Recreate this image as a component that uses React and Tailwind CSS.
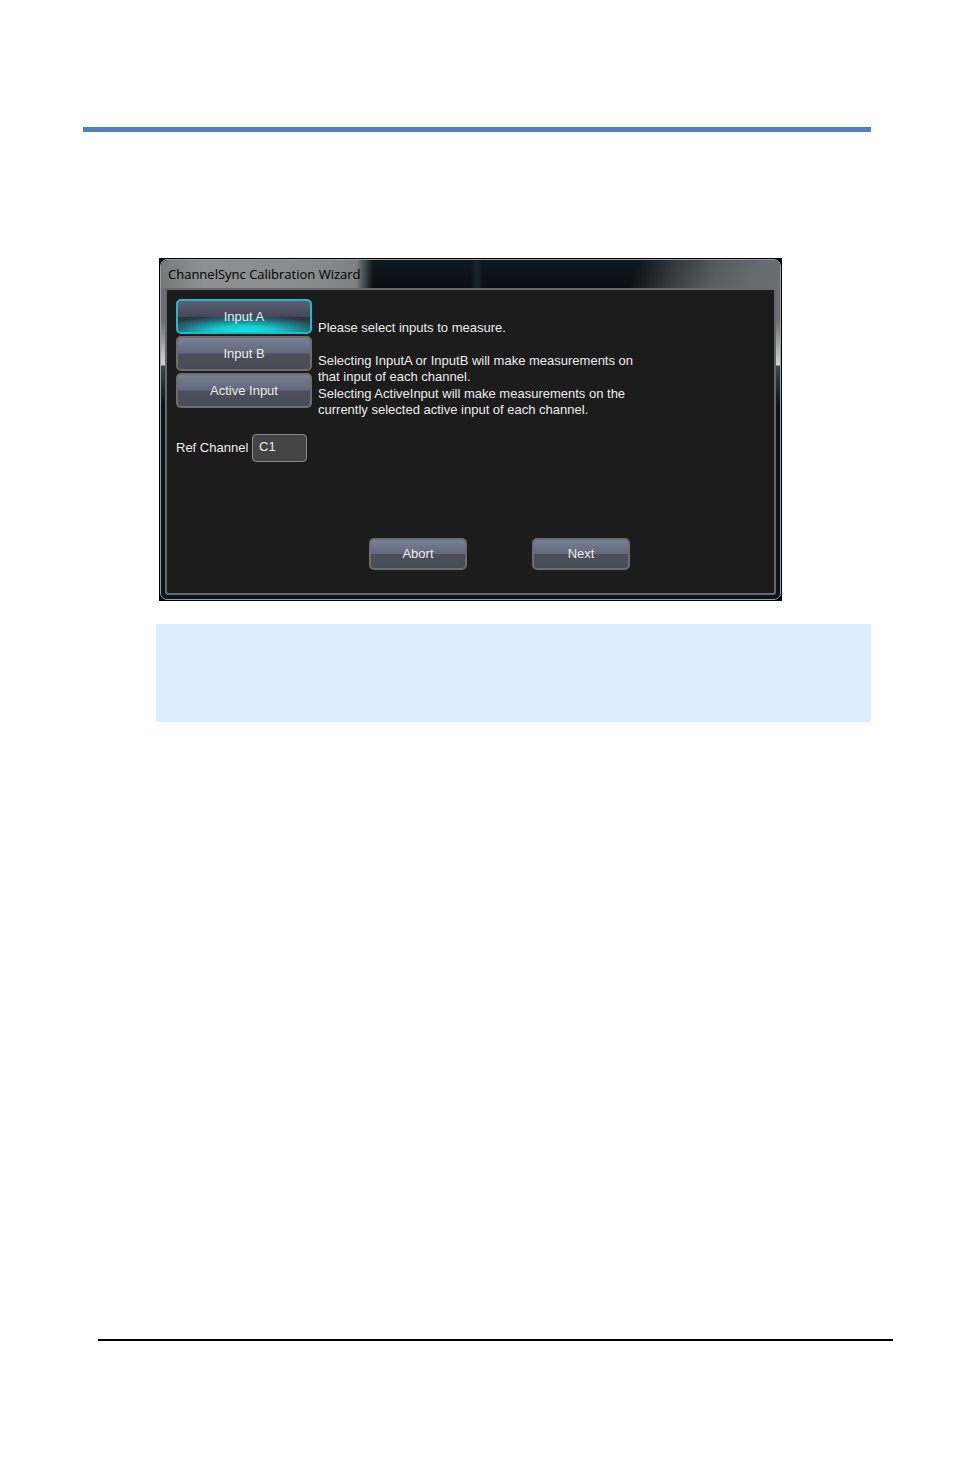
import React from 'react';
import clsx from 'clsx';

const inputs = ['Input A', 'Input B', 'Active Input'];

const WizardButton = ({ active, className, children }) => (
  <button
    type="button"
    aria-pressed={active}
    className={clsx(
      'rounded-[5px] border-2 text-[13px] leading-4 text-[#ececec]',
      active
        ? 'border-[#25b9c4] bg-[radial-gradient(ellipse_65%_55%_at_50%_100%,#14e6e8_0%,#14cdd2_35%,#14a0aa80_75%,transparent_100%),linear-gradient(#5c6074_0%,#444859_50%,#2f3240_51%,#2a4c58_100%)]'
        : 'border-[#6c6c6e] bg-[linear-gradient(#7a7f94_0%,#62677b_49%,#4b4e5a_51%,#484c56_100%)]',
      className
    )}
  >
    {children}
  </button>
);

const TitleBar = () => (
  <div className="flex h-7 items-center rounded-t-[6px] bg-[linear-gradient(110deg,transparent_76%,#3c3f42_83%,#5a5d60_89%,#66696d_95%,#6b6e72_100%),linear-gradient(90deg,transparent_50%,#1a252c_51%,transparent_52%),linear-gradient(#11181d,#090e16)]">
    <div className="flex h-full items-center rounded-tl-[6px] bg-[linear-gradient(90deg,#77797b_0%,#8e8f90_20%,#8a8b8c_70%,#808182_92%,transparent_100%)] pr-3 pl-[7px]">
      <h1 className="font-['Open_Sans','Noto_Sans',sans-serif] text-[13px] leading-4 text-black">
        ChannelSync Calibration Wizard
      </h1>
    </div>
  </div>
);

const CalibrationWizard = () => (
  <div className="w-full max-w-[623px] bg-black p-px">
    <div className="rounded-[7px] border border-[#9c9fa1] bg-[linear-gradient(#6b6e72_0px,#6b6e72_60px,#d4d5d6_105px,#3f454a_106px,#0d131a_145px,#0d131a_100%)]">
      <TitleBar />
      <div className="mx-1 pb-1">
        <div className="rounded-[3px] border-2 border-[#66686b] bg-[#1c1c1c] px-[9px] pt-[9px] pb-[23px]">
          <div className="flex gap-[6px]">
            <div className="flex w-[136px] shrink-0 flex-col gap-[2px]">
              {inputs.map((name) => (
                <WizardButton key={name} active={name === 'Input A'} className="h-[35px] w-full">
                  {name}
                </WizardButton>
              ))}
            </div>
            <div className="pt-[21px] text-[13px] leading-4 text-[#ececec]">
              <p className="mb-[17px]">Please select inputs to measure.</p>
              <p className="mb-px">
                Selecting InputA or InputB will make measurements on
                <br />
                that input of each channel.
              </p>
              <p>
                Selecting ActiveInput will make measurements on the
                <br />
                currently selected active input of each channel.
              </p>
            </div>
          </div>

          <div className="mt-4 flex items-center gap-[2px]">
            <label htmlFor="ref-channel" className="w-[74px] text-[13px] leading-4 whitespace-nowrap text-[#ececec]">
              Ref Channel
            </label>
            <input
              id="ref-channel"
              type="text"
              defaultValue="C1"
              className="h-7 w-[55px] rounded-[4px] border border-[#8c8c8c] bg-[#444444] px-[6px] pb-1 text-[13px] leading-4 text-[#ececec]"
            />
          </div>

          <div className="mt-[76px] flex justify-center gap-[65px] pl-[58px]">
            <WizardButton className="h-8 w-[98px]">Abort</WizardButton>
            <WizardButton className="h-8 w-[98px]">Next</WizardButton>
          </div>
        </div>
      </div>
    </div>
  </div>
);

const App = () => {
  return (
    <div className="flex min-h-screen flex-col bg-white font-['Liberation_Sans',Arial,sans-serif]">
      {/* Header rule */}
      <header className="mx-[83px] mt-[127px] h-[5px] bg-[#4f81bd]" />

      <main className="mr-[83px] ml-[156px] pt-[126px]">
        <div className="pl-[3px]">
          <CalibrationWizard />
        </div>
        {/* Note panel */}
        <div className="mt-[23px] h-[98px] bg-[#ddeeff]" />
      </main>

      {/* Footer rule */}
      <footer className="mt-auto mr-[61px] mb-[133px] ml-[98px] h-[2px] bg-black" />
    </div>
  );
};

export default App;
